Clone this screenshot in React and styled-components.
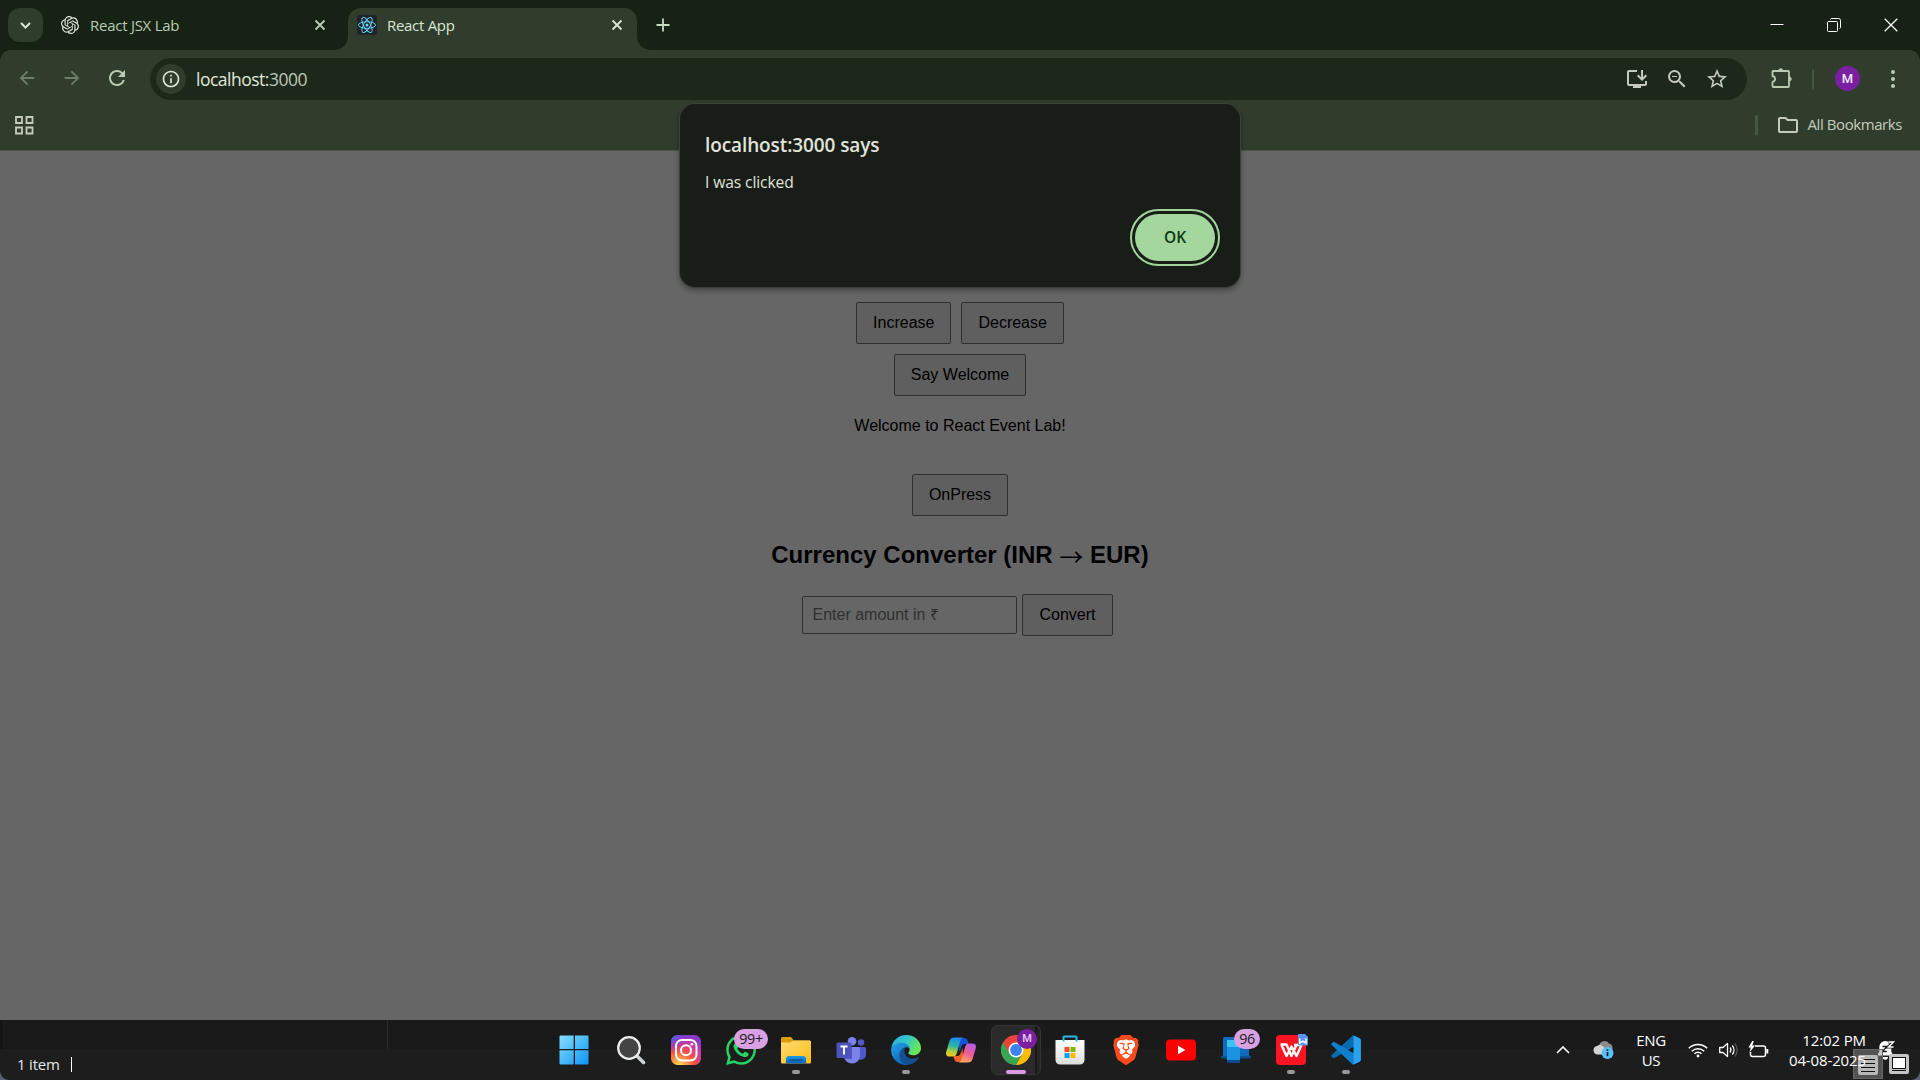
import React from "react";
import styled, { createGlobalStyle, css } from "styled-components";
import {
  MdOutlineInstallDesktop, MdZoomOut, MdStarBorder,
  MdRefresh, MdArrowBack, MdArrowForward, MdInfoOutline, MdOutlineFolder,
} from "react-icons/md";
import { SiOpenai, SiWhatsapp, SiBrave } from "react-icons/si";

const GlobalStyle = createGlobalStyle`
  * { box-sizing: border-box; }
  body { margin: 0; background: #666; overflow: hidden; }
  svg { flex-shrink: 0; }
`;

const ui = css`font-family: "Open Sans", "Noto Sans", sans-serif;`;

const Screen = styled.div`
  width: 1920px;
  height: 1080px;
  display: flex;
  flex-direction: column;
  background: #566070;
  ${ui}
`;

/* ---------- tab strip ---------- */
const TabStrip = styled.div`
  height: 50px;
  display: flex;
  align-items: stretch;
  background: #162213;
  color: #b9ccb2;
`;
const TabSearch = styled.div`
  width: 35px;
  height: 34px;
  margin: 8px 0 0 8px;
  border-radius: 12px;
  background: #2f3d2c;
  display: flex;
  align-items: center;
  justify-content: center;
`;
const Tab = styled.div`
  position: relative;
  display: flex;
  align-items: center;
  width: ${(p) => p.$w}px;
  margin: ${(p) => (p.$active ? "8px 0 0" : "8px 0 8px")};
  padding: 0 ${(p) => p.$pr}px ${(p) => (p.$active ? "8px" : "0")} ${(p) => p.$pl}px;
  background: ${(p) => (p.$active ? "#303d2d" : "transparent")};
  border-radius: 13px 13px 0 0;
  color: ${(p) => (p.$active ? "#dbe5d5" : "#b9ccb2")};
  ${(p) => p.$active && css`
    &::before, &::after {
      content: "";
      position: absolute;
      bottom: 0;
      width: 13px;
      height: 13px;
    }
    &::before { left: -13px; background: radial-gradient(circle at 0 0, transparent 12.5px, #303d2d 13px); }
    &::after { right: -13px; background: radial-gradient(circle at 100% 0, transparent 12.5px, #303d2d 13px); }
  `}
`;
const TabTitle = styled.span`
  flex: 1;
  margin-left: ${(p) => p.$ml}px;
  font-size: 15px;
  letter-spacing: ${(p) => p.$ls}px;
  line-height: 20px;
`;
const ReactFavicon = styled.span`
  width: 20px;
  height: 20px;
  border-radius: 3px;
  background: #20232a;
  display: flex;
`;
const NewTab = styled.div`
  display: flex;
  align-items: center;
  margin-left: 19px;
`;
const WindowControls = styled.div`
  margin-left: auto;
  display: flex;
  align-items: center;
  gap: 43px;
  padding: 0 22px 1px 0;
`;

/* ---------- toolbar ---------- */
const ToolbarBack = styled.div`background: #162213;`;
const Toolbar = styled.div`
  height: 50px;
  display: flex;
  align-items: center;
  padding: 8px 0 0 16px;
  background: #303d2d;
  border-radius: 11px 11px 0 0;
  color: #b9ccb2;
`;
const NavIcon = styled.span`
  display: flex;
  width: 24px;
  margin-right: ${(p) => p.$gap}px;
  opacity: ${(p) => (p.$off ? 0.45 : 1)};
  padding-bottom: 2px;
`;
const Omnibox = styled.div`
  width: 1597px;
  height: 42px;
  border-radius: 21px;
  background: #1c291a;
  display: flex;
  align-items: center;
  padding: 0 18px 0 6px;
  color: #c6c8c2;
`;
const SiteInfo = styled.span`
  width: 30px;
  height: 30px;
  border-radius: 50%;
  background: #303d2d;
  color: #dfe5da;
  display: flex;
  align-items: center;
  justify-content: center;
`;
const Url = styled.span`
  flex: 1;
  margin-left: 10px;
  font-size: 17.5px;
  letter-spacing: -0.5px;
  line-height: 24px;
  color: #e0e6da;
`;
const Port = styled.span`color: #bcc6b5;`;
const OmniActions = styled.span`
  display: flex;
  align-items: center;
  gap: 16px;
`;
const Extensions = styled.span`
  display: flex;
  margin: 0 0 2px 24px;
`;
const Bar = styled.span`
  width: ${(p) => p.$w || 2}px;
  height: 20px;
  border-radius: 1px;
  background: #465643;
  margin: ${(p) => p.$m};
`;
const Avatar = styled.span`
  width: 25px;
  height: 25px;
  border-radius: 50%;
  background: #7b1fa2;
  color: #f1e6f5;
  font: 500 13px/25px Roboto, sans-serif;
  text-align: center;
  margin: 0 31px 1px 0;
`;
const BookmarksBar = styled.div`
  height: 51px;
  display: flex;
  align-items: center;
  padding: 0 18px 0 15px;
  background: #303d2d;
  border-bottom: 1px solid #465643;
  color: #c5cbbf;
`;
const AllBookmarks = styled.span`
  font-size: 15px;
  letter-spacing: -0.42px;
  margin: 0 0 2px 8px;
`;

/* ---------- dialog ---------- */
const Dialog = styled.section`
  position: absolute;
  left: 680px;
  top: 104px;
  width: 560px;
  height: 183px;
  border-radius: 15px;
  background: #191d18;
  box-shadow: 0 0 0 1px #3a4038, 0 3px 6px rgba(0, 0, 0, 0.4);
  display: flex;
  flex-direction: column;
  padding: 26px 25px 0 25px;
`;
const DialogTitle = styled.h1`
  margin: 0;
  font-size: 19px;
  line-height: 30px;
  font-weight: 600;
  letter-spacing: -0.1px;
  color: #e0e4da;
`;
const DialogText = styled.p`
  margin: 11px 0 0;
  font-size: 15.6px;
  line-height: 22px;
  letter-spacing: -0.1px;
  color: #e0e4da;
`;
const OkButton = styled.button`
  align-self: flex-end;
  width: 80px;
  height: 47px;
  margin-top: 21px;
  padding-bottom: 2px;
  border: 0;
  border-radius: 24px;
  background: #a3d79d;
  color: #0a3a12;
  outline: 2px solid #9fd399;
  outline-offset: 3px;
  font-size: 15.5px;
  font-weight: 600;
  ${ui}
`;

/* ---------- page ---------- */
const Page = styled.main`
  height: 869px;
  background: #666;
  display: flex;
  flex-direction: column;
  align-items: center;
  padding-top: 151px;
  font: 16px/18px "Liberation Sans", Arial, sans-serif;
  color: #000;
`;
const Row = styled.div`
  display: flex;
  align-items: center;
  gap: ${(p) => p.$gap || 0}px;
  margin-top: ${(p) => p.$mt || 0}px;
  margin-right: ${(p) => p.$mr || 0}px;
`;
const Button = styled.button`
  height: 42px;
  padding: 0 16px;
  border: 1px solid #2f2f2f;
  border-radius: 2px;
  background: #5f5f5f;
  color: #000;
  font: 16px/18px "Liberation Sans", Arial, sans-serif;
`;
const Message = styled.p`margin: 21px 0 0;`;
const Heading = styled.h2`
  margin: 25px 0 0;
  font-size: 24px;
  line-height: 28px;
  font-weight: bold;
`;
const Arrow = styled.span`
  position: relative;
  top: 3px;
  font-family: "Noto Sans CJK JP", sans-serif;
  font-weight: 400;
  line-height: 1;
`;
const AmountInput = styled.input`
  width: 215px;
  height: 38px;
  padding: 0 9px;
  border: 1px solid #2f2f2f;
  border-radius: 2px;
  background: #666;
  font: 16px "Liberation Sans", Arial, "Noto Sans", sans-serif;
  &::placeholder { color: #303030; opacity: 1; }
`;

/* ---------- taskbar ---------- */
const Taskbar = styled.footer`
  height: 60px;
  display: flex;
  background: linear-gradient(#1a1a1a 29px, #1d1d1d 29px);
  border-radius: 0 0 9px 9px;
  color: #fff;
`;
const StatusArea = styled.div`
  width: 548px;
  padding-top: 29px;
  display: flex;
  align-items: flex-start;
  background: linear-gradient(#2c2c2c, #2c2c2c) 387px 0 / 1px 29px no-repeat,
    linear-gradient(#141414, #141414) 0 0 / 3px 29px no-repeat;
`;
const StatusText = styled.span`
  margin: 4px 11px 0 17px;
  font-size: 15px;
  line-height: 22px;
  letter-spacing: -0.2px;
  color: #e6e6e6;
`;
const Caret = styled.span`
  width: 1px;
  height: 15px;
  margin-top: 8px;
  background: #fff;
`;
const Slot = styled.div`
  position: relative;
  width: 55px;
  height: 60px;
  display: flex;
  align-items: center;
  justify-content: center;
  padding-right: ${(p) => p.$pr || 0}px;
  padding-left: ${(p) => p.$pl || 0}px;
  ${(p) => p.$active && css`
    &::before {
      content: "";
      position: absolute;
      inset: 5px 2px 5px 3px;
      border: 1px solid #333;
      border-radius: 6px;
      background: linear-gradient(90deg, #2a2a2a 43px, #181818 43px, #181818 45px, #252525 45px);
    }
  `}
  ${(p) => p.$running && css`
    &::after {
      content: "";
      position: absolute;
      bottom: 6px;
      left: calc(50% - ${p.$active ? 10 : 4}px);
      width: ${p.$active ? 20 : 8}px;
      height: 4px;
      border-radius: 2px;
      background: ${p.$active ? "#d99be0" : "#999"};
    }
  `}
  svg { position: relative; }
`;
const Badge = styled.span`
  position: absolute;
  top: 9px;
  left: ${(p) => p.$left}px;
  width: ${(p) => p.$w}px;
  height: 20px;
  border-radius: 10px;
  background: #d9a0e3;
  color: #1b1b1b;
  font-size: 14.3px;
  letter-spacing: -0.3px;
  line-height: 20px;
  text-align: center;
`;
const ProfileBadge = styled.span`
  position: absolute;
  top: 9px;
  left: 29px;
  width: 20px;
  height: 20px;
  border-radius: 50%;
  background: #7b1fa2;
  color: #e3cdea;
  font: 500 11px/20px Roboto, sans-serif;
  text-align: center;
`;
const Tray = styled.div`
  position: relative;
  flex: 1;
  display: flex;
  align-items: center;
  padding-left: 182px;
`;
const TrayItem = styled.span`
  display: flex;
  justify-content: center;
  width: ${(p) => p.$w}px;
`;
const TrayText = styled.span`
  position: relative;
  z-index: 1;
  width: ${(p) => p.$w}px;
  padding-bottom: 1px;
  text-align: ${(p) => p.$align};
  font-size: 15px;
  line-height: 20px;
  letter-spacing: ${(p) => p.$ls}px;
  white-space: nowrap;
  span { display: block; }
`;
const ViewToggle = styled.div`
  position: absolute;
  left: 480px;
  top: 29px;
  display: flex;
`;
const ViewOption = styled.span`
  width: 30px;
  height: 30px;
  display: flex;
  align-items: center;
  justify-content: center;
  padding-top: ${(p) => (p.$on ? 2 : 0)}px;
  margin-right: 1px;
  background: ${(p) => (p.$on ? "rgba(150,150,150,0.45)" : "transparent")};
  border: ${(p) => (p.$on ? "1px solid #666" : "0")};
`;

const Cross = ({ s = 10, w = 1.8, c = "currentColor" }) => (
  <svg width={s} height={s} viewBox="0 0 10 10" overflow="visible">
    <path d="M0.5 0.5l9 9M9.5 0.5l-9 9" stroke={c} strokeWidth={w} />
  </svg>
);

const PuzzleIcon = () => (
  <svg width="22" height="22" viewBox="0 0 22 22" fill="none" stroke="currentColor" strokeWidth="1.800" strokeLinejoin="round">
    <path d="M2 4h15a1 1 0 011 1v14a1 1 0 01-1 1H2.500a1 1 0 01-1-1v-4.200c3.400-.3 3.400-5.300 0-5.600V4.500z" />
    <path d="M7.500 4a2.200 2.200 0 014.400 0zM18 9.800a2.200 2.200 0 010 4.400z" fill="currentColor" strokeWidth="1" />
  </svg>
);

const ReactMark = () => (
  <svg width="20" height="20" viewBox="-10 -10 20 20" fill="none" stroke="#61dafb" strokeWidth="0.9">
    <ellipse rx="8.6" ry="3.3" />
    <ellipse rx="8.6" ry="3.3" transform="rotate(60)" />
    <ellipse rx="8.6" ry="3.3" transform="rotate(120)" />
    <circle r="1.5" fill="#61dafb" stroke="none" />
  </svg>
);

const WindowsLogo = () => (
  <svg width="30" height="30" viewBox="0 0 30 30">
    <defs><linearGradient id="win" x1="0" y1="0" x2="1" y2="1" gradientUnits="objectBoundingBox">
      <stop offset="0" stopColor="#86dffc" /><stop offset="1" stopColor="#0c94f4" /></linearGradient></defs>
    <path fill="url(#win)" d="M1.5 .5H15V14H.5V1.5a1 1 0 011-1zM16 .5h12.500a1 1 0 011 1V14H16zM.5 15H15v14.500H1.500a1 1 0 01-1-1zM16 15h13.500v13.500a1 1 0 01-1 1H16z" />
    <path stroke="#1a1a1a" strokeWidth="1.200" d="M15.300 0v30M0 14.600h30" />
  </svg>
);
const SearchLogo = () => (
  <svg width="30" height="30" viewBox="0 0 30 30">
    <path d="M20 20l7.500 7.500" stroke="#cfd3d8" strokeWidth="3.600" strokeLinecap="round" />
    <circle cx="13" cy="13" r="10.800" fill="#444" stroke="#eceef0" strokeWidth="2.200" />
  </svg>
);
const InstagramLogo = () => (
  <svg width="30" height="30" viewBox="0 0 30 30">
    <defs>
      <radialGradient id="ig" cx="0.27" cy="1.05" r="1.05">
        <stop offset="0" stopColor="#fed55b" /><stop offset="0.12" stopColor="#fec64f" />
        <stop offset="0.48" stopColor="#fb543e" /><stop offset="0.800" stopColor="#c837ab" /><stop offset="1" stopColor="#8a3ac8" />
      </radialGradient>
      <radialGradient id="ig2" cx="0" cy="0" r="0.600"><stop offset="0" stopColor="#3771e8" /><stop offset="1" stopColor="#6a30e0" stopOpacity="0" /></radialGradient>
    </defs>
    <rect width="30" height="30" rx="6.500" fill="url(#ig)" />
    <rect width="30" height="30" rx="6.500" fill="url(#ig2)" />
    <g fill="none" stroke="#fff" strokeWidth="2"><rect x="5" y="5" width="20.500" height="20.500" rx="6" /><circle cx="15" cy="15.200" r="5" /></g>
    <circle cx="20.900" cy="9.200" r="1.400" fill="#fff" />
  </svg>
);
const FolderLogo = () => (
  <svg width="30" height="30" viewBox="0 0 30 30">
    <defs><linearGradient id="fold" x1="0" y1="0" x2="1" y2="1"><stop offset="0" stopColor="#ffdc73" /><stop offset="1" stopColor="#fdbb16" /></linearGradient>
      <linearGradient id="foldb" x1="0" y1="0" x2="0" y2="1"><stop offset="0" stopColor="#1c9be8" /><stop offset="1" stopColor="#0b63b5" /></linearGradient></defs>
    <path fill="#dd9c0b" d="M0 3.500A1.500 1.500 0 011.500 2H10l3 3.500H28.500A1.500 1.500 0 0130 7v8H0z" />
    <path fill="url(#fold)" d="M0 7.500h9L13 5.500h15.500A1.500 1.500 0 0130 7v20.500a1 1 0 01-1 1H1a1 1 0 01-1-1z" />
    <path fill="url(#foldb)" d="M5 28.500V24a3 3 0 013-3h14a3 3 0 013 3v4.500z" />
    <path stroke="#064a8c" strokeWidth="1.300" d="M8.500 25h13" />
  </svg>
);
const TeamsLogo = () => (
  <svg width="30" height="30" viewBox="0 0 30 30">
    <circle cx="25" cy="7.500" r="3.300" fill="#5059c9" /><circle cx="16" cy="6.300" r="4.300" fill="#7b83eb" />
    <path fill="#5059c9" d="M20 12h8.500a1.500 1.500 0 011.500 1.500v6a5.500 5.500 0 01-10 3z" />
    <path fill="#7b83eb" d="M8 12h14.500a1.500 1.500 0 011.500 1.500v7a8 8 0 01-16 0z" />
    <path fill="#555cc0" d="M8 12h8v12H8z" />
    <rect x=".5" y="7.500" width="15" height="15.500" rx="1.500" fill="#4b53bc" />
    <path d="M4.500 11.500h7M8 11.500v8" stroke="#fff" strokeWidth="1.900" />
  </svg>
);
const EdgeLogo = () => (
  <svg width="30" height="30" viewBox="0 0 30 30">
    <defs>
      <linearGradient id="e1" x1="0" y1="0" x2="1" y2="0.500"><stop offset="0" stopColor="#2cabe4" /><stop offset=".5" stopColor="#35c5c9" /><stop offset="1" stopColor="#6be755" /></linearGradient>
      <linearGradient id="e2" x1="0" y1="0" x2=".6" y2="1"><stop offset="0" stopColor="#1fa5e8" /><stop offset="1" stopColor="#0f62b5" /></linearGradient>
    </defs>
    <path fill="url(#e1)" d="M.3 13C1.500 5.500 7.500 0 15 0c9 0 15 6.300 15 13 0 4.600-3.500 7.300-7.600 7.300-3.400 0-5.100-1.300-5.100-2.300 0-.8 1.300-1.200 1.300-3.600 0-3-3-5.900-7.600-5.900C5.500 8.500 1.700 10.700.3 13z" />
    <path fill="url(#e2)" d="M.1 14C.5 11 5 7.800 10.600 7.800c5 0 8.200 3.300 8.200 6.300-1-1.700-3-2.300-4.600-1.700-3.700 1.500-5.800 5.400-4 10 1.400 3.700 4.700 6.300 7.800 7.300A15 15 0 01.1 14z" />
    <path fill="#14508f" d="M14.200 12.400c-2.600 5.500 1.200 11.300 7.300 11.300 2.800 0 4.400-1.100 5.600-1.500.6-.2.9.3.6.8-1.900 3.300-6.500 7-11.700 7-4.400-1-8-6-7.500-10.500.3-3.800 2.800-6.400 5.700-7.100z" />
  </svg>
);
const CopilotLogo = () => (
  <svg width="30" height="30" viewBox="0 0 30 30">
    <defs>
      <linearGradient id="c1" x1=".5" y1="0" x2=".3" y2="1"><stop offset="0" stopColor="#1b8bf0" /><stop offset=".45" stopColor="#2bb59b" /><stop offset=".75" stopColor="#b6cf3a" /><stop offset="1" stopColor="#f7c51e" /></linearGradient>
      <linearGradient id="c2" x1=".7" y1="0" x2=".3" y2="1"><stop offset="0" stopColor="#b45be8" /><stop offset=".5" stopColor="#ef5b92" /><stop offset="1" stopColor="#ffab5c" /></linearGradient>
    </defs>
    <path fill="#1a50d8" d="M13 3h5.500c2 0 2.700 1.300 3.200 3l1 3h-4c-2 0-2.800 1-3.400 3l-2 5z" />
    <path fill="#f2602c" d="M17 27h-5.500c-2 0-2.700-1.300-3.200-3l-1-3h4c2 0 2.800-1 3.400-3l2-5z" />
    <path fill="url(#c1)" d="M8.500 2.500h9c-2 .3-2.800 2-3.500 4.500l-3 10.500c-.7 2.500-1.600 4-4 4H3.500c-3 0-4-1.800-3.200-5l3-10C4.200 3.500 5.500 2.500 8.500 2.500z" />
    <path fill="url(#c2)" d="M21.500 27.500h-9c2-.3 2.800-2 3.500-4.500l3-10.500c.7-2.500 1.600-4 4-4h3.500c3 0 4 1.800 3.200 5l-3 10c-.9 3-2.200 4-5.200 4z" />
  </svg>
);
const ChromeLogo = () => (
  <svg width="30" height="30" viewBox="-15 -15 30 30">
    <circle r="15" fill="#ea4335" />
    <path fill="#34a853" d="M-13 -7.500A15 15 0 000 15L6.500 3.750 0 3-6.500 3.750z" />
    <path fill="#fbbc04" d="M0 15A15 15 0 0013 -7.500H0L6.500 3.750z" />
    <circle r="7.500" fill="#fff" /><circle r="5.900" fill="#3b82f0" />
  </svg>
);
const StoreLogo = () => (
  <svg width="30" height="30" viewBox="0 0 30 30">
    <defs><linearGradient id="st" x1="0" y1="0" x2="0" y2="1"><stop offset="0" stopColor="#fff" /><stop offset="1" stopColor="#ddd" /></linearGradient></defs>
    <path fill="url(#st)" d="M.5 5h29v20a4.500 4.500 0 01-4.500 4.500H5A4.500 4.500 0 01.5 25z" />
    <path fill="none" stroke="#29b6e8" strokeWidth="2" d="M8.500 6.500V2.200a.7.7 0 01.7-.7h11.600a.7.7 0 01.7.7v4.300" />
    <path fill="#f25022" d="M9.500 12h5v5h-5z" /><path fill="#7fba00" d="M15.500 12h5v5h-5z" />
    <path fill="#00a4ef" d="M9.500 18h5v5h-5z" /><path fill="#ffb900" d="M15.500 18h5v5h-5z" />
  </svg>
);
const BraveLogo = () => (
  <svg width="30" height="30" viewBox="0 0 30 30">
    <path fill="#fff" d="M6 6l9-3 9 3 1 9-5 9-5 4-5-4-5-9z" />
    <SiBrave x="0" y="0" size="30" color="#fb4a1c" />
  </svg>
);
const YoutubeLogo = () => (
  <svg width="30" height="30" viewBox="0 0 30 30">
    <rect y="4.500" width="30" height="21" rx="4" fill="#f00" /><path fill="#fff" d="M12 10.800v8.400l7.500-4.200z" />
  </svg>
);
const PhoneLinkLogo = () => (
  <svg width="30" height="30" viewBox="0 0 30 30">
    <rect x="2" y="2" width="26" height="20" rx="1.500" fill="#0f6cbd" /><path fill="#0b4f94" d="M0 21h30v1a1.500 1.500 0 01-1.500 1.500h-27A1.500 1.500 0 010 22z" />
    <path fill="#3cc4f0" d="M6 5h13v10H6z" /><path fill="#1a93e0" d="M6 12h13v13H6z" /><path fill="#0b4a8c" d="M6 25h13v3H7a1 1 0 01-1-1z" />
  </svg>
);
const WpsLogo = () => (
  <svg width="33" height="32" viewBox="0 -1 33 32">
    <rect width="30" height="30" rx="4" fill="#fc1423" />
    <path fill="none" stroke="#fff" strokeWidth="2.400" strokeLinejoin="round" d="M4.500 9.500h6l5 11.500L20.500 10M5.500 10l5 11 5-9.500 5 9.500 5-11H18" />
    <path fill="#5b93f5" d="M22-1h7l3 3v7.500a1 1 0 01-1 1h-8a1 1 0 01-1-1z" />
    <path fill="none" stroke="#fff" strokeWidth="1.500" d="M23.800 3.500v4.700l3.100-2 3.100 2V3.500" />
  </svg>
);
const CodeLogo = () => (
  <svg width="30" height="30" viewBox="0 0 30 30">
    <path fill="#0b6bb0" d="M22 .3L29 3.500V8L3.500 23a1.300 1.300 0 01-1.500-.1L.6 21.400a1 1 0 010-1.500z" />
    <path fill="#0d7fcc" d="M22 29.700L29 26.500V22L3.500 7a1.300 1.300 0 00-1.500.1L.6 8.600a1 1 0 000 1.500z" />
    <path fill="#27a1f0" d="M22 .3l7 3.200a1.500 1.500 0 01.9 1.400v20.200a1.500 1.500 0 01-.9 1.400L22 29.700c.6-.5.5-1 .5-1.500V1.800c0-.5.1-1-.5-1.500z" />
  </svg>
);

const CloudIcon = () => (
  <svg width="21" height="20" viewBox="0 0 21 20">
    <path fill="#8a8a8a" d="M6 6a5.500 5.500 0 0110-2.500A4.500 4.500 0 0117 12H6z" />
    <path fill="#d4d4d4" d="M4.500 14.500A4.300 4.300 0 014 6a5 5 0 016 .5l4 3.500-3 4.500z" />
    <circle cx="14.500" cy="13" r="6" fill="#58c1f5" /><path stroke="#123" strokeWidth="1.700" d="M14.500 12v4.300M14.500 9.200v1.700" />
  </svg>
);
const WifiIcon = () => (
  <svg width="20" height="16" viewBox="0 0 20 16" fill="none" stroke="#fff" strokeWidth="1.500">
    <path d="M.8 6.200a13 13 0 0118.400 0" /><path d="M3.800 9.200a8.800 8.800 0 0112.400 0" /><path d="M6.500 11.800a5 5 0 017 0" /><circle cx="10" cy="14" r="1.400" fill="#fff" stroke="none" />
  </svg>
);
const SpeakerIcon = () => (
  <svg width="20" height="16" viewBox="0 0 20 16" fill="none" stroke="#fff" strokeWidth="1.300">
    <path d="M.7 5.500h3.300l4.500-4v13l-4.500-4H.7z" strokeLinejoin="round" /><path d="M11 5.500a4 4 0 010 5" /><path d="M13.300 3.500a7 7 0 010 9" /><path stroke="#555" d="M15.800 1.500a10 10 0 010 13" />
  </svg>
);
const BatteryIcon = () => (
  <svg width="21" height="18" viewBox="0 0 21 18" fill="none" stroke="#fff" strokeWidth="1.500">
    <path d="M7 5h8.500a2 2 0 012 2v6.500a2 2 0 01-2 2h-11a2 2 0 01-2-2V11" /><path d="M19.300 8v4.500" strokeWidth="2" />
    <path fill="#fff" stroke="none" d="M4.200 0L.5 6.500h2.300L1.500 11.500 7 4.500H4.300L5.800 0z" />
  </svg>
);
const BellIcon = () => (
  <svg width="18" height="20" viewBox="0 0 18 20">
    <path fill="#fff" d="M1 15.500V14l1.300-2V7a6 6 0 0112 0v5l1.300 2v1.500zM5.500 17h5.500a2.700 2.700 0 01-5.500 0z" />
    <path d="M5.500 6.500h4.300l-4.300 5h4.300" stroke="#1a1a1a" strokeWidth="1.300" fill="none" />
    <path d="M11.500 2h5l-5 5h5" stroke="#1a1a1a" strokeWidth="3.200" fill="none" />
    <path d="M11.500 2h5l-5 5h5" stroke="#fff" strokeWidth="1.400" fill="none" />
  </svg>
);

const tasks = [
  { icon: <WindowsLogo />, pr: 3 },
  { icon: <SearchLogo /> },
  { icon: <InstagramLogo /> },
  { icon: <SiWhatsapp size={30} color="#25d366" />, badge: "99+", left: 21, w: 34 },
  { icon: <FolderLogo />, running: true },
  { icon: <TeamsLogo /> },
  { icon: <EdgeLogo />, running: true },
  { icon: <CopilotLogo /> },
  { icon: <ChromeLogo />, running: true, active: true },
  { icon: <StoreLogo />, pr: 1 },
  { icon: <BraveLogo /> },
  { icon: <YoutubeLogo /> },
  { icon: <PhoneLinkLogo />, badge: "96", left: 26, w: 26 },
  { icon: <WpsLogo />, running: true, pl: 3 },
  { icon: <CodeLogo />, running: true },
];

export default function App() {
  return (
    <Screen>
      <GlobalStyle />
      <TabStrip>
        <TabSearch>
          <svg width="11" height="7" viewBox="0 0 11 7"><path d="M1 1l4.500 4.500L10 1" fill="none" stroke="#dbe5d5" strokeWidth="2" /></svg>
        </TabSearch>
        <Tab $w={305} $pl={18} $pr={23}>
          <SiOpenai size={18} color="#dfe3dc" />
          <TabTitle $ml={11} $ls={-0.26}>React JSX Lab</TabTitle>
          <Cross />
        </Tab>
        <Tab $active $w={289} $pl={9} $pr={15}>
          <ReactFavicon><ReactMark /></ReactFavicon>
          <TabTitle $ml={10} $ls={-0.3}>React App</TabTitle>
          <Cross />
        </Tab>
        <NewTab><svg width="14" height="14" viewBox="0 0 14 14"><path d="M7 .5v13M.5 7h13" stroke="#c7dbc0" strokeWidth="1.800" /></svg></NewTab>
        <WindowControls>
          <svg width="14" height="14" viewBox="0 0 14 14"><path d="M.5 6.500h13" stroke="#fff" /></svg>
          <svg width="14" height="14" viewBox="0 0 14 14" fill="none" stroke="#fff"><rect x=".5" y="3.500" width="10" height="10" rx="1" /><path d="M3.500 1.500c0-.5.500-1 1-1h7a2 2 0 012 2v7c0 .5-.5 1-1 1" /></svg>
          <Cross s={14} w={0.9} c="#fff" />
        </WindowControls>
      </TabStrip>

      <ToolbarBack>
        <Toolbar>
          <NavIcon $off $gap={21}><MdArrowBack size={22} /></NavIcon>
          <NavIcon $off $gap={20}><MdArrowForward size={22} /></NavIcon>
          <NavIcon $gap={21}><MdRefresh size={24} /></NavIcon>
          <Omnibox>
            <SiteInfo><MdInfoOutline size={20} /></SiteInfo>
            <Url>localhost:<Port>3000</Port></Url>
            <OmniActions>
              <MdOutlineInstallDesktop size={24} />
              <MdZoomOut size={24} />
              <MdStarBorder size={24} />
            </OmniActions>
          </Omnibox>
          <Extensions><PuzzleIcon /></Extensions>
          <Bar $m="0 21px 0 19px" />
          <Avatar>M</Avatar>
          <svg width="4" height="20" viewBox="0 0 4 20" fill="#b9ccb2"><circle cx="2" cy="3" r="2" /><circle cx="2" cy="10" r="2" /><circle cx="2" cy="17" r="2" /></svg>
        </Toolbar>
      </ToolbarBack>
      <BookmarksBar>
        <svg width="19" height="19" viewBox="0 0 19 19" fill="none" stroke="#c5cbbf" strokeWidth="1.800"><path d="M1 1h6v6H1zM11.500 1h6v6h-6zM1 11.500h6v6H1zM11.500 11.500h6v6h-6z" /></svg>
        <Bar $w={3} $m="0 18px 0 auto" />
        <MdOutlineFolder size={24} />
        <AllBookmarks>All Bookmarks</AllBookmarks>
      </BookmarksBar>

      <Page>
        <Row $gap={10}>
          <Button>Increase</Button>
          <Button>Decrease</Button>
        </Row>
        <Row $mt={10}><Button>Say Welcome</Button></Row>
        <Message>Welcome to React Event Lab!</Message>
        <Row $mt={39}><Button>OnPress</Button></Row>
        <Heading>Currency Converter (INR <Arrow>→</Arrow> EUR)</Heading>
        <Row $gap={5} $mt={25} $mr={5}>
          <AmountInput placeholder="Enter amount in ₹" />
          <Button>Convert</Button>
        </Row>
      </Page>

      <Dialog>
        <DialogTitle>localhost:3000 says</DialogTitle>
        <DialogText>I was clicked</DialogText>
        <OkButton>OK</OkButton>
      </Dialog>

      <Taskbar>
        <StatusArea>
          <StatusText>1 item</StatusText>
          <Caret />
        </StatusArea>
        {tasks.map((t, i) => (
          <Slot key={i} $running={t.running} $active={t.active} $pr={t.pr} $pl={t.pl}>
            {t.icon}
            {t.badge && <Badge $left={t.left} $w={t.w}>{t.badge}</Badge>}
            {t.active && <ProfileBadge>M</ProfileBadge>}
          </Slot>
        ))}
        <Tray>
          <TrayItem $w={16}><svg width="14" height="8" viewBox="0 0 14 8"><path d="M1 7l6-6 6 6" fill="none" stroke="#fff" strokeWidth="1.600" /></svg></TrayItem>
          <TrayItem $w={64}><CloudIcon /></TrayItem>
          <TrayText $w={32} $align="center" $ls={-0.4}><span>ENG</span><span>US</span></TrayText>
          <TrayItem $w={62}><WifiIcon /></TrayItem>
          <TrayItem $w={0}><SpeakerIcon /></TrayItem>
          <TrayItem $w={58}><BatteryIcon /></TrayItem>
          <TrayText $w={79} $align="right" $ls={-0.12}><span>12:02 PM</span><span>04-08-2025</span></TrayText>
          <TrayItem $w={40}><BellIcon /></TrayItem>
          <ViewToggle>
            <ViewOption $on><svg width="20" height="20" viewBox="0 0 20 20"><rect width="20" height="20" rx="2" fill="#b8b8b8" /><path d="M3 4.500h14M3 8.500h14M3 12.500h14M3 16.500h14" stroke="#111" /></svg></ViewOption>
            <ViewOption><svg width="20" height="20" viewBox="0 0 20 20"><rect width="20" height="20" rx="2" fill="#c4c4c4" /><rect x="3.500" y="3.500" width="13" height="11" fill="#fff" stroke="#111" /><path d="M3 16.500h14" stroke="#111" /></svg></ViewOption>
          </ViewToggle>
        </Tray>
      </Taskbar>
    </Screen>
  );
}
